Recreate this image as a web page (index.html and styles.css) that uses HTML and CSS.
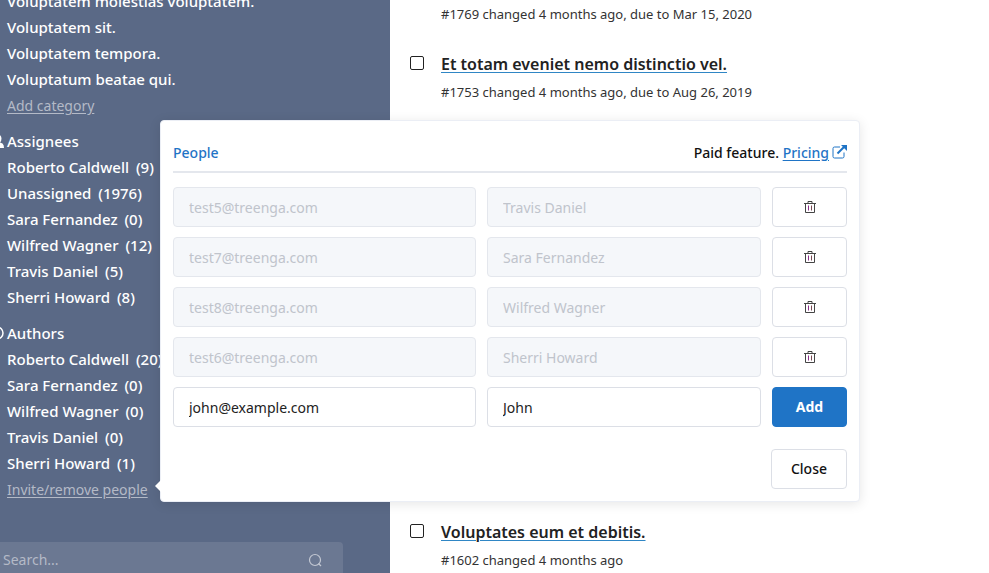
FILE: index.html
```
<!DOCTYPE html>
<html lang="en">
<head>
<meta charset="utf-8">
<title>People</title>
<link rel="stylesheet" href="styles.css">
</head>
<body>
<svg class="sprite" aria-hidden="true">
  <symbol id="trash" viewBox="0 0 14 14"><path d="M1 3.500h12M5 3V1.500h4V3M2.500 3.500v9h9v-9" fill="none" stroke="currentColor"/><path d="M5.500 5.500v5" stroke="#8c2f8c"/><path d="M8.500 5.500v5" stroke="#7a4a55"/></symbol>
</svg>
<div class="app">
  <aside class="sidebar">
    <nav class="tree">
      <ul class="group">
        <li>Voluptatem molestias voluptatem.</li>
        <li>Voluptatem sit.</li>
        <li>Voluptatem tempora.</li>
        <li>Voluptatum beatae qui.</li>
        <li><a class="action" href="#">Add category</a></li>
      </ul>
      <ul class="group">
        <li class="heading"><svg class="mark" viewBox="0 0 14 14" aria-hidden="true"><path d="M7 0a4.500 4.500 0 0 1 4.500 4.500q0 2.500-1.500 4L12.500 9.500q1.500 1 1.500 4.500H0q0-3.500 1.500-4.500L4 8.500q-1.500-1.500-1.500-4A4.500 4.500 0 0 1 7 0z" fill="currentColor"/></svg>Assignees</li>
        <li>Roberto Caldwell <span class="count">(9)</span></li>
        <li>Unassigned <span class="count">(1976)</span></li>
        <li>Sara Fernandez <span class="count">(0)</span></li>
        <li>Wilfred Wagner <span class="count">(12)</span></li>
        <li>Travis Daniel <span class="count">(5)</span></li>
        <li>Sherri Howard <span class="count">(8)</span></li>
      </ul>
      <ul class="group">
        <li class="heading"><svg class="mark" viewBox="0 0 14 14" aria-hidden="true"><circle cx="7" cy="7" r="6" fill="none" stroke="currentColor" stroke-width="1.500"/></svg>Authors</li>
        <li>Roberto Caldwell <span class="count">(20)</span></li>
        <li>Sara Fernandez <span class="count">(0)</span></li>
        <li>Wilfred Wagner <span class="count">(0)</span></li>
        <li>Travis Daniel <span class="count">(0)</span></li>
        <li>Sherri Howard <span class="count">(1)</span></li>
        <li><a class="action" href="#">Invite/remove people</a></li>
      </ul>
    </nav>
    <div class="search">
      <input type="text" placeholder="Search..." aria-label="Search">
      <svg class="lens" viewBox="0 0 14 14" aria-hidden="true"><circle cx="7" cy="7" r="5.500" fill="none" stroke="currentColor" stroke-width="1.200"/><path d="M10.500 10.500l2.500 2.500" stroke="currentColor" stroke-width="1.200"/></svg>
    </div>
  </aside>
  <main class="tasks">
    <p class="meta first">#1769 changed 4 months ago, due to Mar 15, 2020</p>
    <article class="task">
      <input type="checkbox" id="t1753">
      <div>
        <h2><label for="t1753">Et totam eveniet nemo distinctio vel.</label></h2>
        <p class="meta">#1753 changed 4 months ago, due to Aug 26, 2019</p>
      </div>
    </article>
    <article class="task later">
      <input type="checkbox" id="t1602">
      <div>
        <h2><label for="t1602">Voluptates eum et debitis.</label></h2>
        <p class="meta">#1602 changed 4 months ago</p>
      </div>
    </article>
  </main>
</div>
<section class="popover" role="dialog" aria-labelledby="people-title">
  <header class="top">
    <h1 id="people-title">People</h1>
    <p>Paid feature. <a href="#">Pricing</a><svg class="external" viewBox="0 0 15 14" aria-hidden="true"><path d="M8 2H2.500A1.500 1.500 0 0 0 1 3.500v8A1.500 1.500 0 0 0 2.500 13h8a1.500 1.500 0 0 0 1.500-1.500V7.500" fill="none" stroke="currentColor"/><path d="M5.500 8.500L12 2" stroke="currentColor" stroke-width="2"/><path d="M9 0h6v6z" fill="currentColor"/></svg></p>
  </header>
  <form class="people">
    <input type="text" value="test5@treenga.com" aria-label="Email" disabled>
    <input type="text" value="Travis Daniel" aria-label="Name" disabled>
    <button type="button" aria-label="Remove"><svg><use href="#trash"/></svg></button>
    <input type="text" value="test7@treenga.com" aria-label="Email" disabled>
    <input type="text" value="Sara Fernandez" aria-label="Name" disabled>
    <button type="button" aria-label="Remove"><svg><use href="#trash"/></svg></button>
    <input type="text" value="test8@treenga.com" aria-label="Email" disabled>
    <input type="text" value="Wilfred Wagner" aria-label="Name" disabled>
    <button type="button" aria-label="Remove"><svg><use href="#trash"/></svg></button>
    <input type="text" value="test6@treenga.com" aria-label="Email" disabled>
    <input type="text" value="Sherri Howard" aria-label="Name" disabled>
    <button type="button" aria-label="Remove"><svg><use href="#trash"/></svg></button>
    <input type="text" value="john@example.com" aria-label="Email">
    <input type="text" value="John" aria-label="Name">
    <button type="button" class="primary">Add</button>
  </form>
  <footer class="bottom"><button type="button">Close</button></footer>
</section>
</body>
</html>
```
FILE: styles.css
```
* { box-sizing: border-box; }
body { margin: 0; font: 14px/26px "Noto Sans", sans-serif; color: #222; background: #fff; overflow: hidden; }
h1, h2, p, ul { margin: 0; padding: 0; }
ul { list-style: none; }
input, button { font: inherit; }
.sprite { position: absolute; width: 0; height: 0; }
.app { display: flex; height: 100vh; overflow: hidden; }

.sidebar { flex: 0 0 390px; background: #5a6986; color: #fff; overflow: hidden; }
.tree { margin: -12px 0 0 7px; font-size: 15px; font-weight: 500; white-space: nowrap; }
.tree li { height: 26px; }
.group { margin-bottom: 10px; }
.heading { display: flex; align-items: center; }
.count { margin-left: 3px; }
.mark { flex: none; width: 14px; height: 14px; margin-left: -17px; margin-right: 3px; }
.action { font-size: 14px; font-weight: 400; color: #b4bac7; text-decoration: underline; text-underline-offset: 2px; }
.search { display: flex; align-items: center; height: 40px; margin: 40px 47px 0 -12px; padding: 0 21px 4px 15px; border-radius: 4px; background: #6b7892; color: #c3c8d3; }
.search input { flex: 1; min-width: 0; padding: 0; border: 0; background: none; color: inherit; outline: 0; }
.search input::placeholder { color: #b4bac7; opacity: 1; }
.lens { width: 14px; height: 14px; }

.tasks { flex: 1; min-width: 0; padding-left: 20px; }
.meta { font-size: 13px; color: #333; }
.first { margin: 1px 0 24px 31px; }
.task { display: flex; gap: 17px; }
.later { margin-top: 414px; }
.task h2 { font-size: 16px; line-height: 26px; font-weight: 600; margin-bottom: 2px; text-decoration: underline #2f86c5 1px; text-underline-offset: 2px; }
.task input { flex: none; appearance: none; width: 14px; height: 14px; margin: 5px 0 0; border: 1px solid #222; border-radius: 2px; background: #fff; }

.popover { position: absolute; left: 160px; top: 120px; width: 700px; padding: 12px; border: 1px solid #ebeef5; border-radius: 4px; background: #fff; box-shadow: 0 2px 12px rgba(0, 0, 0, .1); }
.popover::before { content: ""; position: absolute; left: -6px; bottom: 9px; border: 6px solid transparent; border-left: 0; border-right-color: #fff; }
.top { display: flex; justify-content: space-between; align-items: center; height: 40px; padding-top: 2px; border-bottom: 2px solid #e4e7ed; margin-bottom: 14px; font-weight: 500; color: #111; }
.top h1 { font-size: 14px; font-weight: 500; color: #1f74c6; }
.top a, .external { color: #1f74c6; }
.top a { text-underline-offset: 2px; }
.external { width: 15px; height: 14px; margin-left: 3px; vertical-align: -1px; }
.people { display: grid; grid-template-columns: 303fr 274fr 75px; gap: 10px 11px; }
.people input { width: 100%; min-width: 0; height: 40px; padding: 0 15px; border: 1px solid #dcdfe6; border-radius: 4px; background: #fff; color: #222; }
.people input:disabled { background: #f5f7fa; border-color: #e4e7ed; color: #c0c4cc; }
.popover button { display: flex; align-items: center; justify-content: center; height: 40px; padding: 0; border: 1px solid #dcdfe6; border-radius: 4px; background: #fff; color: #111; font-weight: 500; }
.popover button svg { width: 14px; height: 14px; color: #444; }
.popover .primary { border-color: #1f74c6; background: #1f74c6; color: #fff; font-weight: 700; }
.bottom { display: flex; justify-content: flex-end; margin-top: 22px; }
.popover .bottom button { padding: 0 19px; }
```
